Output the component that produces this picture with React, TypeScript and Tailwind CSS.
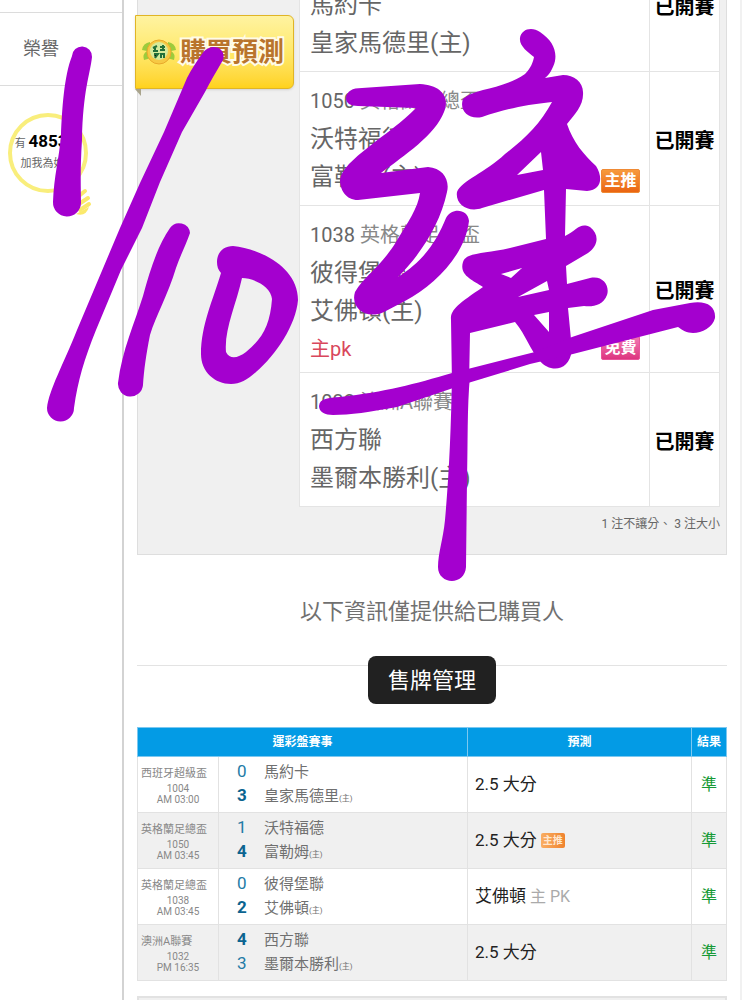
interface Match {
  no: string;
  league: string;
  time: string;
  away: string;
  home: string;
  score: [number, number];
  pick: string;
  pickNote?: string;
  note?: string;
  tag?: "main" | "free";
}

const matches: Match[] = [
  { no: "1004", league: "西班牙超級盃", time: "AM 03:00", away: "馬約卡", home: "皇家馬德里", score: [0, 3], pick: "2.5 大分" },
  { no: "1050", league: "英格蘭足總盃", time: "AM 03:45", away: "沃特福德", home: "富勒姆", score: [1, 4], pick: "2.5 大分", tag: "main" },
  { no: "1038", league: "英格蘭足總盃", time: "AM 03:45", away: "彼得堡聯", home: "艾佛頓", score: [0, 2], pick: "艾佛頓", pickNote: "主 PK", note: "主pk", tag: "free" },
  { no: "1032", league: "澳洲A聯賽", time: "PM 16:35", away: "西方聯", home: "墨爾本勝利", score: [4, 3], pick: "2.5 大分" },
];

export default function App() {
  return (
    <div className="relative flex h-screen overflow-hidden bg-white font-['Roboto','Noto_Sans_CJK_TC',sans-serif] text-[#666]">
      <Sidebar />
      <main className="-mt-[73px] mr-3.5 min-w-0 flex-1 border-r-2 border-[#f1f1f1] px-[13px]">
        <PredictionPanel />
        <p className="mt-10 text-center text-[22px] leading-[34px] text-[#707070]">以下資訊僅提供給已購買人</p>
        <hr className="mt-9 border-[#e3e3e3]" />
        <div className="-mt-2.5 flex justify-center">
          <button className="h-12 rounded-lg bg-[#212121] px-5 text-[22px] text-white">售牌管理</button>
        </div>
        <ResultTable />
        <div className="mt-[15px] h-20 border-2 border-[#e2e2e2] bg-[#f0f0f0]" />
      </main>
      <Scribble />
    </div>
  );
}

function Sidebar() {
  return (
    <aside className="w-[124px] shrink-0 border-r-2 border-[#d3d3d3]">
      <div className="h-3" />
      <div className="flex h-[74px] items-center border-y border-[#dcdcdc] pl-[23px] text-lg">榮譽</div>
      <div className="relative mt-[27px] ml-2 h-[104px] w-[88px]">
        <svg className="absolute inset-0" width="88" height="104" viewBox="0 0 88 104" fill="none">
          <circle cx="40" cy="40" r="38" stroke="#f9ee7c" strokeWidth="4" />
          <path d="M66 87L77 78M68 93L80 85M72 97L81 91" stroke="#fbe96b" strokeWidth="4" strokeLinecap="round" />
          <path d="M68 101Q78 104 81 94Z" fill="#fbe96b" />
        </svg>
        <div className="relative w-20 pt-[18px] text-center text-[11px] leading-5 whitespace-nowrap">
          <p>
            有 <b className="text-[17px] text-black">4853</b> 人
          </p>
          <p>加我為好友</p>
        </div>
      </div>
    </aside>
  );
}

function PredictionPanel() {
  return (
    <section className="flex border border-[#dedede] bg-[#f0f0f0] pt-[9px] pr-1.5 pb-[21px]">
      <div className="w-[161px] shrink-0 pt-[78px]">
        <BuyButton />
      </div>
      <div className="flex-1">
        <table className="w-full border-collapse bg-white">
          <tbody>
            {matches.map((m) => (
              <tr key={m.no} className="border border-[#e4e4e4]">
                <td className="border-r border-[#e4e4e4] p-0 align-top">
                  <div className="flex items-end justify-between pr-[9px] pl-2.5">
                    <div className={m.note ? "pt-2.5 pb-1" : "pt-2.5 pb-[9px]"}>
                      <p className="text-xl leading-[38px]">
                        {m.no} <span className="text-[#888]">{m.league}</span>
                      </p>
                      <p className="text-2xl leading-[38px]">{m.away}</p>
                      <p className="text-2xl leading-[38px]">{m.home}(主)</p>
                      {m.note && <p className="text-xl leading-[38px] text-[#d9475c]">{m.note}</p>}
                    </div>
                    {m.tag && <Tag kind={m.tag} />}
                  </div>
                </td>
                <td className="w-[70px] p-0 pt-1 text-center text-xl font-bold text-black">已開賽</td>
              </tr>
            ))}
          </tbody>
        </table>
        <p className="mt-2 text-right text-xs leading-[18px]">1 注不讓分、 3 注大小</p>
      </div>
    </section>
  );
}

function Tag({ kind }: { kind: "main" | "free" }) {
  return kind === "main" ? (
    <span className="mb-3 h-6 w-[39px] rounded-xs border border-[#ef8a35] bg-linear-to-b from-[#f79a3c] to-[#ea6410] text-center text-base leading-[22px] font-bold text-white">
      主推
    </span>
  ) : (
    <span className="mb-3 h-6 w-[39px] rounded-xs border border-[#e8549a] bg-linear-to-b from-[#f277b4] to-[#dd3480] text-center text-base leading-[22px] font-bold text-white">
      免費
    </span>
  );
}

function BuyButton() {
  return (
    <button className="-ml-[3px] block w-[159px] text-left">
      <span className="flex h-[74px] items-center gap-1 rounded-r-md border border-[#e0b526] bg-linear-to-b from-[#fff3a0] via-[#ffe96a] to-[#ffd21a] pl-1.5 shadow-sm">
        <svg width="34" height="28" viewBox="0 0 34 28">
          <path d="M8 4Q1 5 0 12L5 13Q0 16 2 22L9 20Z" fill="#9dcb3c" />
          <path d="M26 4Q33 5 34 12L29 13Q34 16 32 22L25 20Z" fill="#9dcb3c" />
          <circle cx="17" cy="14" r="12" fill="#f6c944" stroke="#e9a92b" />
          <circle cx="17" cy="13" r="9" fill="#d5ea9a" />
          <path d="M11 10L15 8M11 13H16M13 9V13M18 9H23M18 12H23M21 7V13M12 16H16L13 20M18 16H23M19 16V20M22 16V20" stroke="#23703a" strokeWidth="2" />
        </svg>
        <span className="text-[26px] leading-8 font-bold whitespace-nowrap text-[#b9742c] [-webkit-text-stroke:4px_#fffbe8] [paint-order:stroke_fill]">
          購買預測
        </span>
      </span>
      <svg width="6" height="7" viewBox="0 0 6 7">
        <path d="M0 0H6V7Z" fill="#a9a48c" />
      </svg>
    </button>
  );
}

function ResultTable() {
  return (
    <table className="mt-[23px] w-full table-fixed border-collapse border border-[#e2e2e2]">
      <colgroup>
        <col className="w-[81px]" />
        <col />
        <col className="w-[224px]" />
        <col className="w-[35px]" />
      </colgroup>
      <thead>
        <tr className="h-[29px] bg-[#039be5] text-xs leading-4 text-white">
          <th colSpan={2} className="border border-[#7cc8f0]">運彩盤賽事</th>
          <th className="border border-[#7cc8f0]">預測</th>
          <th className="border border-[#7cc8f0] whitespace-nowrap">結果</th>
        </tr>
      </thead>
      <tbody>
        {matches.map((m) => (
          <tr key={m.no} className="h-14 even:bg-[#f0f0f0]">
            <td className="border border-[#e2e2e2] p-0 text-center text-[10px] leading-[11px] text-[#888]">
              <p className="pl-[3px] text-left text-[11px] leading-[18px]">{m.league}</p>
              <p>{m.no}</p>
              <p>{m.time}</p>
            </td>
            <td className="border border-[#e2e2e2] p-0">
              <ScoreLine score={m.score[0]} win={m.score[0] > m.score[1]} team={m.away} />
              <ScoreLine score={m.score[1]} win={m.score[1] > m.score[0]} team={m.home} home />
            </td>
            <td className="border border-[#e2e2e2] p-0 pl-[7px] text-[17px] text-[#222]">
              <div className="flex items-center gap-1">
                {m.pick}
                {m.pickNote && <span className="text-base text-[#aaa]">{m.pickNote}</span>}
                {m.tag === "main" && (
                  <span className="h-[15px] w-6 rounded-xs bg-linear-to-r from-[#f9ad62] to-[#ef832c] text-center text-[10px] leading-[15px] font-bold text-[#ffe7cf]">
                    主推
                  </span>
                )}
              </div>
            </td>
            <td className="border border-[#e2e2e2] p-0 text-center text-base text-[#169a36]">準</td>
          </tr>
        ))}
      </tbody>
    </table>
  );
}

function ScoreLine({ score, win, team, home }: { score: number; win: boolean; team: string; home?: boolean }) {
  return (
    <p className="flex items-baseline text-[15px] leading-[23px] text-[#707070]">
      <span className={win ? "w-[45px] pl-[18px] text-[17px] font-bold text-[#0b6490]" : "w-[45px] pl-[18px] text-[17px] text-[#237ba6]"}>
        {score}
      </span>
      {team}
      {home && <small className="text-[8px]">(主)</small>}
    </p>
  );
}

// freehand marker drawn over the page
function Scribble() {
  return (
    <svg className="pointer-events-none absolute top-0 left-0" width="756" height="1000" viewBox="0 0 756 1000" fill="#a400cf">
      {/* 1/10 */}
      <path d="M72 56A10 10 0 0 1 92 57C90 75 83 90 82 140C80 170 81 190 81 203A14 14 0 0 1 53 202C54 175 59 160 61 135C62 110 64 76 72 56Z" />
      <path d="M202 54C209 42 227 46 223 60C216 72 210 82 205 92L182 132L160 182L142 228L121 270L96 330C84 360 78 380 74 408A13 13 0 0 1 47 408C49 390 63 365 77 330L120 228L140 183L164 132L187 78C192 68 197 61 202 54Z" />
      <path d="M170 228A11 11 0 0 1 190 233C186 245 180 256 176 268C168 295 156 315 150 335C146 355 144 370 143 385A12 12 0 0 1 118 383C122 350 135 322 143 296C150 270 158 245 170 228Z" />
      <path
        fillRule="evenodd"
        d="M217 262C217 252 224 246 233 246C262 249 298 268 298 300C296 325 276 355 256 372C247 380 240 384 231 384C215 384 201 372 201 354C201 325 213 300 221 273C218 270 217 266 217 262ZM242 278C253 278 271 286 272 299C270 325 263 338 246 352C238 358 230 360 226 352C224 330 236 305 242 278Z"
      />
      {/* left half */}
      <path d="M346 98C347 91 352 88 362 88L420 84C442 85 450 98 444 112C435 135 405 155 381 173L428 167C443 168 450 180 447 192C440 225 420 255 398 277C425 260 437 240 446 218C452 207 468 209 469 221C465 255 435 285 405 301L384 312C366 320 350 308 355 292C365 275 380 268 396 242C408 222 418 208 420 193L358 200C346 200 340 190 340 180C342 160 390 135 416 108L358 106C350 106 346 103 346 98Z" />
      {/* right half */}
      <path
        fillRule="evenodd"
        d="M520 38C521 29 532 26 540 32C552 40 557 50 555 61C553 69 549 75 545 78L563 75C574 75 583 82 583 92C584 105 575 114 567 124C573 142 584 155 596 166C603 177 602 190 587 191L566 189L565 236C577 230 580 222 590 227C600 235 598 246 588 253L566 266L567 284L590 278C603 275 610 286 607 295C603 306 592 307 584 306L568 308L572 350C569 373 549 372 540 361C530 350 526 335 515 322L470 333L469 385H452L451 320C450 310 458 304 483 287C472 280 459 275 463 262C466 252 485 254 510 248L546 239L544 190L482 208C468 213 455 204 457 192C462 180 485 173 505 154C526 138 540 124 552 102C525 105 505 109 482 117C468 120 459 110 463 99C475 88 502 90 525 74C531 68 533 62 534 57C528 52 519 46 520 38ZM541 152L517 175L543 170ZM501 274L522 268L511 278ZM518 297L547 281L549 290ZM534 315L549 312L549 332Z"
      />
      <path d="M319 406C320 398 328 398 340 397C385 392 415 384 452 373L535 352L572 337L653 310L690 303C706 300 716 306 715 318C713 327 702 333 693 333C687 333 682 330 678 327L573 354L530 364L468 383L397 407C370 412 350 415 333 415C325 415 319 412 319 406Z" />
      <path d="M452 375H470C467 410 468 440 467 480L466 567C465 586 438 585 438 567C438 553 443 540 445 520C449 475 451 430 452 375Z" />
    </svg>
  );
}
